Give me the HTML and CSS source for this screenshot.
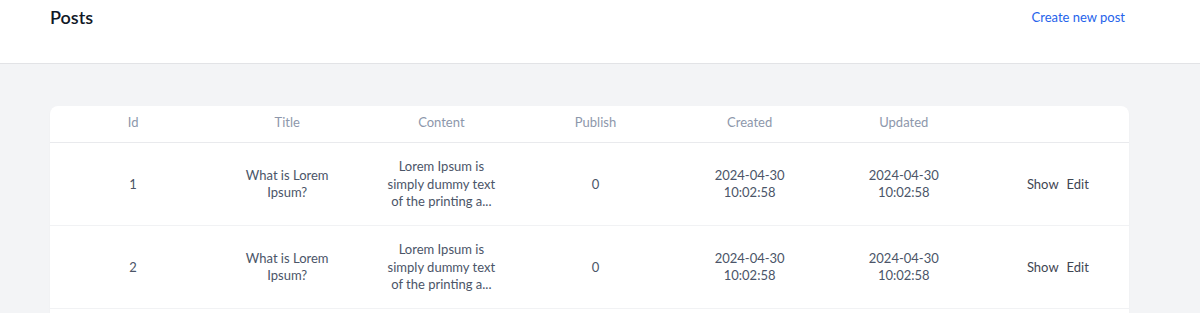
FILE: index.html
```html
<!DOCTYPE html>
<html lang="en">

<head>
    <meta charset="UTF-8">
    <meta name="viewport" content="width=device-width, initial-scale=1.0">
    <title>Posts</title>
    <link rel="stylesheet" href="styles.css">
</head>

<body>
    <header class="page-header">
        <div class="container header-inner">
            <h2>Posts</h2>
            <a href="#" class="create-link">Create new post</a>
        </div>
    </header>

    <main class="page-main">
        <div class="container">
            <div class="card">
                <table class="posts-table">
                    <thead>
                        <tr>
                            <th>Id</th>
                            <th>Title</th>
                            <th>Content</th>
                            <th>Publish</th>
                            <th>Created</th>
                            <th>Updated</th>
                            <th></th>
                        </tr>
                    </thead>
                    <tbody>
                        <tr>
                            <td>1</td>
                            <td>What is Lorem Ipsum?</td>
                            <td>Lorem Ipsum is simply dummy text of the printing a...</td>
                            <td>0</td>
                            <td>2024-04-30<br>10:02:58</td>
                            <td>2024-04-30<br>10:02:58</td>
                            <td class="actions"><a href="#">Show</a><a href="#">Edit</a></td>
                        </tr>
                        <tr>
                            <td>2</td>
                            <td>What is Lorem Ipsum?</td>
                            <td>Lorem Ipsum is simply dummy text of the printing a...</td>
                            <td>0</td>
                            <td>2024-04-30<br>10:02:58</td>
                            <td>2024-04-30<br>10:02:58</td>
                            <td class="actions"><a href="#">Show</a><a href="#">Edit</a></td>
                        </tr>
                        <tr>
                            <td>3</td>
                            <td>What is Lorem Ipsum?</td>
                            <td>Lorem Ipsum is simply dummy text of the printing a...</td>
                            <td>0</td>
                            <td>2024-04-30<br>10:02:58</td>
                            <td>2024-04-30<br>10:02:58</td>
                            <td class="actions"><a href="#">Show</a><a href="#">Edit</a></td>
                        </tr>
                    </tbody>
                </table>
            </div>
        </div>
    </main>
</body>

</html>
```

FILE: styles.css
```css
* {
    margin: 0;
    padding: 0;
    box-sizing: border-box;
}

body {
    font-family: "Lato", "Inter", sans-serif;
    background: #f3f4f6;
    color: #111827;
}

a {
    text-decoration: none;
}

.container {
    width: 1079px;
    margin-left: 50px;
}

.page-header {
    background: white;
    border-bottom: 1px solid #e2e3e6;
    height: 64px;
}

.header-inner {
    display: flex;
    justify-content: space-between;
    align-items: flex-start;
    padding-top: 5px;
}

.page-header h2 {
    font-size: 18px;
    font-weight: 600;
    line-height: 24px;
    color: #111827;
}

.create-link {
    font-size: 13px;
    line-height: 24px;
    color: #2563eb;
    margin-right: 4px;
}

.page-main {
    padding-top: 42px;
}

.card {
    background: white;
    border-radius: 8px;
    overflow: hidden;
    box-shadow: 0 1px 2px rgba(0, 0, 0, 0.04);
}

.posts-table {
    width: 100%;
    border-collapse: collapse;
    table-layout: fixed;
    font-size: 13px;
    line-height: 17.5px;
}

.posts-table th,
.posts-table td {
    text-align: center;
    padding: 15.5px 12px 14px 24px;
}

.posts-table th {
    font-weight: 400;
    color: #8d97ab;
    padding-top: 8px;
    padding-bottom: 10px;
    border-bottom: 1px solid #e9eaed;
}

.posts-table td {
    color: #4b5568;
    border-bottom: 1px solid #f1f2f4;
}

.actions a {
    color: #3f4652;
    margin: 0 4px;
}
```
